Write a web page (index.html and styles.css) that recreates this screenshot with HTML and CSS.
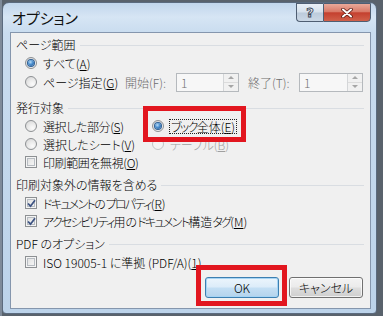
FILE: index.html
```html
<!DOCTYPE html>
<html lang="ja">
<head>
<meta charset="utf-8">
<title>オプション</title>
<link rel="stylesheet" href="styles.css">
</head>
<body>
<div class="window">
  <div class="titlebar">
    <div class="title">オプション</div>
    <div class="caption-buttons">
      <div class="cbtn help"><span>?</span></div>
      <div class="cbtn close">
        <svg width="12" height="10" viewBox="0 0 12 10">
          <path d="M2 1.5 L10 8.5 M10 1.5 L2 8.5" stroke="#5a1a12" stroke-width="3.6" stroke-linecap="round" fill="none"/>
          <path d="M2 1.5 L10 8.5 M10 1.5 L2 8.5" stroke="#ffffff" stroke-width="2" stroke-linecap="round" fill="none"/>
        </svg>
      </div>
    </div>
  </div>
  <div class="client">
    <div class="group g1">
      <div class="heading"><span>ページ範囲</span></div>
      <div class="row">
        <div class="opt"><span class="radio on"></span><span>すべて(<u>A</u>)</span></div>
      </div>
      <div class="row range">
        <div class="opt col1"><span class="radio"></span><span>ページ指定(<u>G</u>)</span></div>
        <span class="dlabel">開始(F):</span>
        <div class="spin"><span class="val">1</span><span class="arrows"><i class="up"></i><i class="dn"></i></span></div>
        <span class="dlabel second">終了(T):</span>
        <div class="spin wide"><span class="val">1</span><span class="arrows"><i class="up"></i><i class="dn"></i></span></div>
      </div>
    </div>

    <div class="group g2">
      <div class="heading"><span>発行対象</span></div>
      <div class="row">
        <div class="opt col2"><span class="radio"></span><span class="t">選択した部分(<u>S</u>)</span></div>
        <div class="opt"><span class="radio on"></span><span class="focus"><span class="k">ブック</span>全体(<u>E</u>)</span></div>
      </div>
      <div class="row">
        <div class="opt col2"><span class="radio"></span><span>選択したシート(<u>V</u>)</span></div>
        <div class="opt disabled"><span class="radio off"></span><span>テーブル(<u>B</u>)</span></div>
      </div>
      <div class="row">
        <div class="opt"><span class="check"></span><span class="t">印刷範囲を無視(<u>O</u>)</span></div>
      </div>
    </div>

    <div class="group g3">
      <div class="heading"><span>印刷対象外の情報を含める</span></div>
      <div class="row">
        <div class="opt"><span class="check on"><svg width="9" height="9" viewBox="0 0 9 9"><path d="M1 4.5 L3.5 7.2 L8 1.2" stroke="#3e5483" stroke-width="1.8" fill="none"/></svg></span><span><span class="k">ドキュメント</span>の<span class="k">プロパティ</span>(<u>R</u>)</span></div>
      </div>
      <div class="row">
        <div class="opt"><span class="check on"><svg width="9" height="9" viewBox="0 0 9 9"><path d="M1 4.5 L3.5 7.2 L8 1.2" stroke="#3e5483" stroke-width="1.8" fill="none"/></svg></span><span><span class="k">アクセシビリティ</span>用の<span class="k">ドキュメント</span>構造<span class="k">タグ</span>(<u>M</u>)</span></div>
      </div>
    </div>

    <div class="group g4">
      <div class="heading"><span>PDF のオプション</span></div>
      <div class="row">
        <div class="opt"><span class="check"></span><span>ISO 19005-1 に準拠 (PDF/A)(<u>1</u>)</span></div>
      </div>
    </div>

    <div class="buttons">
      <button class="btn default">OK</button>
      <button class="btn">キャンセル</button>
    </div>
  </div>
</div>
<div class="mark mark1"></div>
<div class="mark mark2"></div>
</body>
</html>
```

FILE: styles.css
```css
* { box-sizing: border-box; }
html, body { margin: 0; }
body {
  width: 383px;
  height: 316px;
  overflow: hidden;
  position: relative;
  padding: 2px 6px 2px 2px;
  background: linear-gradient(90deg, #7e8a99 0, #7e8a99 2px, #59626c 2px);
  font-family: "Noto Sans CJK JP", "Noto Sans", sans-serif;
  font-size: 12px;
  font-weight: 300;
  color: #000;
  font-feature-settings: "palt";
}
.window {
  width: 375px;
  height: 312px;
  border: 1px solid #5b6b7f;
  border-radius: 7px 7px 4px 4px;
  background: linear-gradient(180deg, #c1d6ec 0, #d6e5f4 14px, #c9dcef 30px, #bcd3ea 100%);
  padding: 0 5px 4px 7px;
  display: flex;
  flex-direction: column;
}
.titlebar {
  height: 29px;
  display: flex;
  justify-content: space-between;
  align-items: flex-start;
}
.title {
  font-size: 15px;
  font-weight: 400;
  line-height: 29px;
  padding-left: 2px;
  color: #111;
}
.caption-buttons {
  display: flex;
}
.cbtn {
  height: 19px;
  border: 1px solid #4f5e72;
  display: flex;
  align-items: center;
  justify-content: center;
}
.help {
  width: 27px;
  border-right: none;
  border-radius: 0 0 0 4px;
  background: linear-gradient(180deg, #e9eff6 0, #d6e1ec 48%, #bccbdb 52%, #cbd8e6 100%);
}
.help span {
  font-family: "DejaVu Sans", sans-serif;
  font-weight: bold;
  font-size: 13px;
  line-height: 1;
  color: #f3f5f8;
  -webkit-text-stroke: 0.9px #3c4858;
}
.close {
  width: 48px;
  border-radius: 0 0 4px 0;
  background: linear-gradient(180deg, #e9a99a 0, #d97a68 45%, #c4402f 52%, #d0604a 100%);
}
.client {
  flex: 1;
  border: 1px solid #8596ad;
  background: #f0f0f0;
  padding: 2px 0 0 5px;
  display: flex;
  flex-direction: column;
}
.group { display: flex; flex-direction: column; }
.g2 { margin-top: 6px; }
.g3 { margin-top: 4px; }
.g4 { margin-top: 4px; }
.heading {
  height: 19px;
  display: flex;
  align-items: center;
  gap: 4px;
  white-space: nowrap;
}
.heading::after {
  content: "";
  flex: 1;
  height: 1px;
  margin-right: 6px;
  margin-top: 2px;
  background: #d9dde2;
}
.row {
  height: 18px;
  display: flex;
  align-items: center;
  padding-left: 9px;
  white-space: nowrap;
}
.row.range { height: 20px; }
.opt {
  display: flex;
  align-items: center;
  gap: 6px;
}
.col1 { width: 100px; }
.col2 { width: 127px; }
.k { letter-spacing: -1.7px; }
.t { letter-spacing: -0.4px; }
u { text-decoration-thickness: 1px; text-underline-offset: 1px; }
.radio {
  width: 12px;
  height: 12px;
  border-radius: 50%;
  border: 1px solid #8d9093;
  background: radial-gradient(circle at 65% 70%, #fbfbfb 0, #eaeaea 45%, #d2d2d2 100%);
  display: flex;
  align-items: center;
  justify-content: center;
  flex: none;
}
.radio.on::after {
  content: "";
  width: 6px;
  height: 6px;
  border-radius: 50%;
  background: radial-gradient(circle at 40% 35%, #b8dcf8 0, #4a8fcf 45%, #1d4f8a 100%);
  box-shadow: 0 0 0 1px #2d5f95;
}
.radio.off {
  border-color: #c2c4c6;
  background: #f4f4f4;
}
.disabled { color: #a0a0a0; }
.check {
  width: 12px;
  height: 12px;
  border: 1px solid #8d9093;
  box-shadow: inset 0 0 0 1px #f4f4f4, inset 0 0 0 2px #b7bcc2;
  background-image: linear-gradient(135deg, #dcdcdc, #fafafa);
  display: flex;
  align-items: center;
  justify-content: center;
  flex: none;
}
.check svg { display: block; }
.focus {
  outline: 1px dotted #222;
  outline-offset: 0;
  padding: 0 1px;
  line-height: 13px;
}
.dlabel {
  width: 51px;
  color: #6d6d6d;
}
.dlabel.second { margin-left: 9px; }
.spin {
  width: 63px;
  height: 19px;
  border: 1px solid #b5b9bd;
  background: #f7f7f7;
  display: flex;
  justify-content: space-between;
  align-items: stretch;
}
.spin.wide { width: 64px; }
.val {
  color: #707070;
  padding-left: 4px;
  line-height: 17px;
}
.arrows {
  width: 15px;
  display: flex;
  flex-direction: column;
  border-left: 1px solid #d4d6d8;
}
.arrows i {
  flex: 1;
  display: flex;
  align-items: center;
  justify-content: center;
  background: #f1f1f1;
}
.arrows i.up { border-bottom: 1px solid #dcdcdc; }
.arrows i::after {
  content: "";
  width: 0;
  height: 0;
  border-left: 3px solid transparent;
  border-right: 3px solid transparent;
}
.arrows i.up::after { border-bottom: 3px solid #a6a6a6; }
.arrows i.dn::after { border-top: 3px solid #a6a6a6; }
.buttons {
  margin-top: 6px;
  display: flex;
  justify-content: flex-end;
  gap: 10px;
  padding-right: 7px;
}
.btn {
  width: 74px;
  height: 21px;
  border: 1px solid #707070;
  border-radius: 3px;
  font-family: "Noto Sans CJK JP", "Noto Sans", sans-serif;
  font-size: 12px;
  font-weight: 300;
  font-feature-settings: "palt";
  color: #000;
  padding: 0;
  background: linear-gradient(180deg, #f3f3f3 0, #ebebeb 48%, #dddddd 52%, #cfcfcf 100%);
  box-shadow: inset 0 0 0 1px rgba(255,255,255,0.7);
}
.btn.default {
  border-color: #3c7fb1;
  background: linear-gradient(180deg, #ecf5fc 0, #dcecf9 48%, #c4dff4 52%, #b4d3ec 100%);
  box-shadow: inset 0 0 0 1px #a6d4f4;
}
.mark {
  position: absolute;
  border: 5px solid #e2161f;
}
.mark1 { left: 143px; top: 106px; width: 103px; height: 36px; }
.mark2 { left: 196px; top: 265px; width: 91px; height: 41px; }
```
